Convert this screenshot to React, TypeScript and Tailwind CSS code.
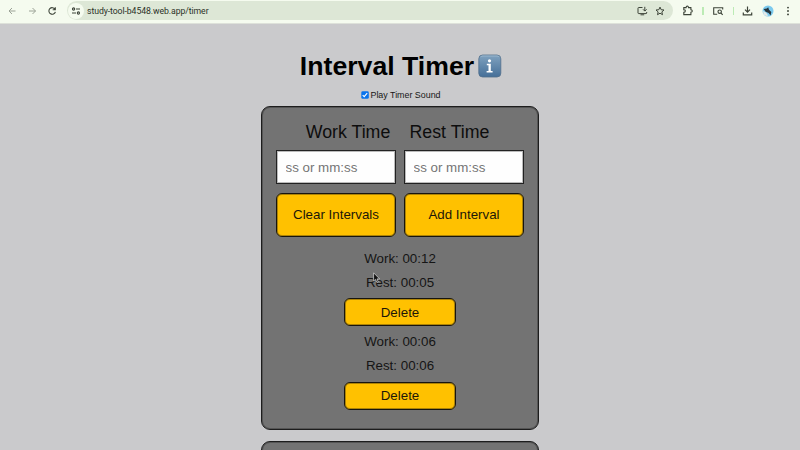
import React from "react";

const btn =
  "flex items-center justify-center border border-[#17150f] bg-[#ffc100] text-[13.33px] text-[#1c1708] shadow-[inset_0_0_0_1px_rgba(23,21,15,0.35)]";

function NavIcon({ d, className }: { d: string; className: string }) {
  return (
    <svg viewBox="0 0 10 10" className={"h-[10px] w-[10px] shrink-0 " + className} fill="none" stroke="currentColor" strokeWidth="1">
      <path d={d} />
    </svg>
  );
}

function Toolbar() {
  return (
    <header className="flex h-[24px] items-start border-b border-[#dde1d9] bg-[#f5fbef] pt-px text-[#3d4439]">
      <div className="flex h-[19px] w-[67px] shrink-0 items-center pl-[7px]">
        <NavIcon className="text-[#9ca397]" d="M8.5 5H2M5 2L2 5L5 8" />
        <NavIcon className="ml-[10px] text-[#9ca397]" d="M2 5H8.5M5.5 2L8.5 5L5.5 8" />
        <svg viewBox="0 0 10 10" className="ml-[10px] h-[10px] w-[10px]" fill="none" stroke="currentColor" strokeWidth="1.1">
          <path d="M8 3.2A3.3 3.3 0 1 0 8.4 5.8M8.3 1.3V3.8H5.7" />
        </svg>
      </div>
      <div className="flex h-[19px] w-[606px] shrink-0 items-center rounded-full bg-[#dde7d6] pl-[1px]">
        <span className="flex h-[16px] w-[16px] items-center justify-center rounded-full bg-[#f5fbef]">
          <svg viewBox="0 0 10 10" className="h-[10px] w-[10px]" fill="none" stroke="currentColor" strokeWidth="1.1">
            <circle cx="2.6" cy="3" r="1.1" />
            <path d="M5 3H9M1 7H5" />
            <circle cx="7.4" cy="7" r="1.1" />
          </svg>
        </span>
        <span className="mt-px ml-[3px] font-['Roboto',sans-serif] text-[8.7px] leading-none whitespace-nowrap tracking-[-0.08px] text-[#2b3128]">
          study-tool-b4548.web.app/timer
        </span>
        <div className="ml-auto flex items-center pr-[8px]">
          <svg viewBox="0 0 11 10" className="h-[10px] w-[11px]" fill="none" stroke="currentColor" strokeWidth="1">
            <path d="M5.5 1.5H1.7Q1 1.5 1 2.2V7Q1 7.6 1.7 7.6H9Q9.7 7.6 9.7 7V6M3.5 8.8H7.2M7.8 .8V5M6 3.3L7.8 5.1L9.6 3.3" />
          </svg>
          <svg viewBox="0 0 10 10" className="ml-[7px] h-[10px] w-[10px]" fill="none" stroke="currentColor" strokeWidth="1" strokeLinejoin="round">
            <path d="M5 1.1L6.15 3.7L9 4L6.85 5.9L7.5 8.7L5 7.2L2.5 8.7L3.15 5.9L1 4L3.85 3.7Z" />
          </svg>
        </div>
      </div>
      <div className="flex h-[19px] items-center pl-[9px]">
        <svg viewBox="0 0 11 11" className="h-[11px] w-[11px]" fill="none" stroke="currentColor" strokeWidth="1.1">
          <path d="M1.8 2.6H4.1Q4.1 1.1 5.3 1.1T6.5 2.6H8.9V4.8Q10.3 4.8 10.3 6T8.9 7.2V9.6H1.8V7.3Q3.3 7.3 3.3 6T1.8 4.8Z" />
        </svg>
        <span className="ml-[9px] h-[8px] w-[1.5px] bg-[#bcebb5]" />
        <svg viewBox="0 0 11 10" className="ml-[9px] h-[10px] w-[11px]" fill="none" stroke="currentColor" strokeWidth="1.1">
          <path d="M4.2 8.2H.7V1.8H9.7V3.4" />
          <circle cx="6.7" cy="5.7" r="1.7" />
          <path d="M7.9 7L9.7 8.8" />
        </svg>
        <span className="ml-[9px] h-[8px] w-[1.5px] bg-[#bcebb5]" />
        <svg viewBox="0 0 11 10" className="ml-[8px] h-[10px] w-[11px]" fill="none" stroke="currentColor" strokeWidth="1.2">
          <path d="M5.5 .6V6M3 3.7L5.5 6.2L8 3.7M1.3 6.6V8.9H9.7V6.6" />
        </svg>
        <svg viewBox="0 0 12 12" className="ml-[9px] h-[12px] w-[12px]">
          <circle cx="6" cy="6" r="5.5" fill="#7ccaee" />
          <path d="M1 6L4 7.5L6.2 10.6L4 11L1.7 9.5Z" fill="#e5e9e7" />
          <path d="M1.6 4L4.8 3.5L6.2 2.2L7 4.8L9.3 7L8.6 10.6L6.6 8L3.6 6.8Z" fill="#26343c" />
        </svg>
        <svg viewBox="0 0 4 10" className="ml-[12px] h-[10px] w-[4px]" fill="currentColor">
          <circle cx="2" cy="1.6" r=".95" />
          <circle cx="2" cy="5" r=".95" />
          <circle cx="2" cy="8.4" r=".95" />
        </svg>
      </div>
    </header>
  );
}

function InfoBadge() {
  return (
    <svg viewBox="0 0 24 24" className="ml-[4px] h-[24px] w-[24px]">
      <defs>
        <linearGradient id="info" x1="0" y1="0" x2="0" y2="1">
          <stop offset="0" stopColor="#80a2bf" />
          <stop offset="1" stopColor="#456f98" />
        </linearGradient>
      </defs>
      <rect x=".8" y="1" width="22" height="22" rx="3.8" fill="url(#info)" stroke="#526f8a" strokeWidth=".8" />
      <path d="M2.5 3.2Q3 2 5 2H19Q21 2 21.5 3.2" fill="none" stroke="#a1bdd1" strokeWidth=".8" />
      <circle cx="11.5" cy="6.8" r="1.6" fill="#fff" />
      <path d="M8.8 9.8H12.8V17H14.6V18.4H8.6V17H10.5V11.2H8.8Z" fill="#fff" />
    </svg>
  );
}

function TimeField({ label, shift }: { label: string; shift: string }) {
  return (
    <label className="flex w-[120px] flex-col">
      <span className={"h-[35px] text-center text-[17.78px] leading-[34px] whitespace-nowrap text-[#0d0d0d] " + shift}>{label}</span>
      <input
        placeholder="ss or mm:ss"
        className="h-[34px] w-full border border-[#222] bg-[#fefefe] px-[8.5px] text-[13.33px] shadow-[inset_0_0_0_1px_rgba(34,34,34,0.3)] outline-none placeholder:text-[#757575]"
      />
    </label>
  );
}

function Interval({ work, rest }: { work: string; rest: string }) {
  return (
    <li className="flex h-[83.4px] flex-col items-center text-[13.33px] leading-[23.7px] text-[#151515]">
      <span>Work: {work}</span>
      <span>Rest: {rest}</span>
      <button className={btn + " mt-[4px] h-[28px] w-[112px] shrink-0 rounded-[6px]"}>Delete</button>
    </li>
  );
}

export default function App() {
  return (
    <div className="relative h-[450px] w-[800px] overflow-hidden bg-[#cacacc] font-['Liberation_Sans',Arial,sans-serif]">
      <Toolbar />
      <main className="flex flex-col items-center">
        <div className="mt-[25px] flex h-[34px] items-center pl-[2px]">
          <h1 className="text-[26.67px] leading-[32px] font-bold whitespace-nowrap text-black">Interval Timer</h1>
          <InfoBadge />
        </div>
        <label className="mt-[6px] flex h-[13px] items-center pl-[2px] text-[8.89px] leading-[13px] text-[#171717]">
          <svg viewBox="0 0 8 8" className="mr-[1px] mb-[2px] h-[8px] w-[8px]">
            <rect x=".3" y=".3" width="7.5" height="7.5" rx="1.4" fill="#0873ed" />
            <path d="M1.7 4.2L3.2 5.7L6.2 2.2" fill="none" stroke="#fff" strokeWidth="1.1" />
          </svg>
          Play Timer Sound
        </label>
        <section className="mt-[4px] h-[324px] w-[278px] shrink-0 rounded-[9px] border border-[#1d1d1d] bg-[#737373] px-[14px] pt-[8px] shadow-[inset_0_0_0_1px_rgba(29,29,29,0.35)]">
          <div className="flex justify-between">
            <TimeField label="Work Time" shift="pl-[24px]" />
            <TimeField label="Rest Time" shift="pr-[29px]" />
          </div>
          <div className="mt-[9px] flex justify-between">
            <button className={btn + " h-[44px] w-[120px] rounded-[6px]"}>Clear Intervals</button>
            <button className={btn + " h-[44px] w-[120px] rounded-[6px]"}>Add Interval</button>
          </div>
          <ul className="mt-[10px]">
            <Interval work="00:12" rest="00:05" />
            <Interval work="00:06" rest="00:06" />
          </ul>
        </section>
        <section className="mt-[11px] h-[40px] w-[278px] shrink-0 rounded-[9px] border border-[#1d1d1d] bg-[#737373] shadow-[inset_0_0_0_1px_rgba(29,29,29,0.35)]" />
      </main>
      <svg viewBox="0 0 8 12" className="absolute top-[272px] left-[373px] h-[12px] w-[8px]">
        <path d="M.6 .8V9L2.5 7.4L3.9 10.5L5.3 9.9L4 6.9H6.6Z" fill="#111" stroke="#ddd" strokeWidth=".7" />
      </svg>
    </div>
  );
}
